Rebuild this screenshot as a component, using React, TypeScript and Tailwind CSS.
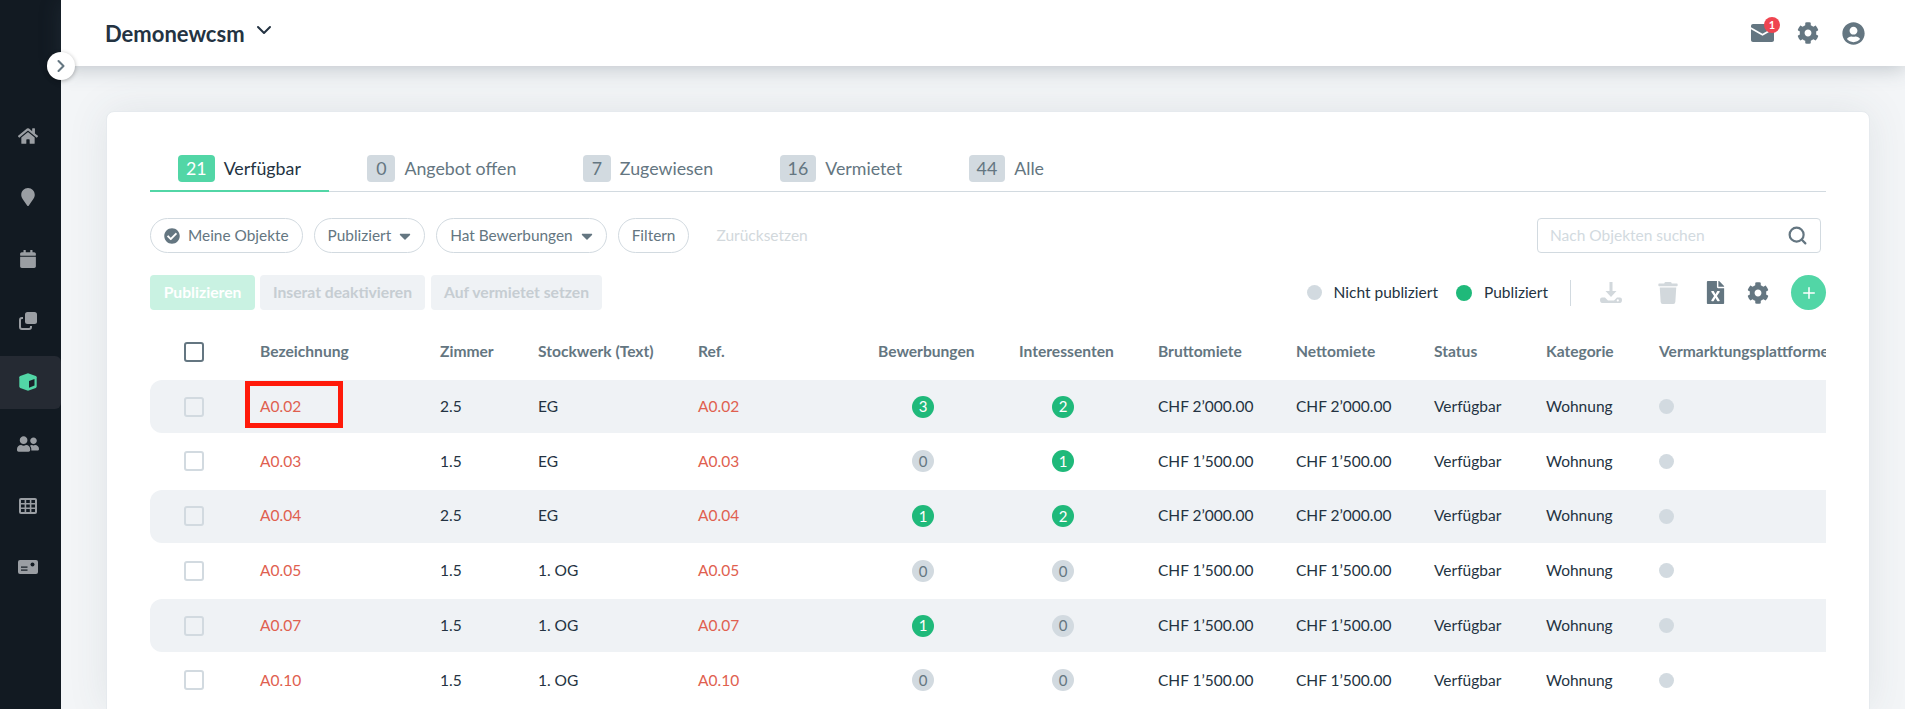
import React from 'react'
import { ChevronDown, ChevronRight, Plus, Search } from 'lucide-react'
import {
  FaCalendar,
  FaCaretDown,
  FaCheckCircle,
  FaCog,
  FaFileExcel,
  FaHome,
  FaMapMarker,
  FaTrash,
  FaUserCircle,
  FaUserFriends,
} from 'react-icons/fa'

const tabs = [
  { count: '21', label: 'Verfügbar', active: true },
  { count: '0', label: 'Angebot offen' },
  { count: '7', label: 'Zugewiesen' },
  { count: '16', label: 'Vermietet' },
  { count: '44', label: 'Alle' },
]

const rows = [
  { id: 'A0.02', rooms: '2.5', floor: 'EG', apps: 3, leads: 2, rent: 'CHF 2’000.00' },
  { id: 'A0.03', rooms: '1.5', floor: 'EG', apps: 0, leads: 1, rent: 'CHF 1’500.00' },
  { id: 'A0.04', rooms: '2.5', floor: 'EG', apps: 1, leads: 2, rent: 'CHF 2’000.00' },
  { id: 'A0.05', rooms: '1.5', floor: '1. OG', apps: 0, leads: 0, rent: 'CHF 1’500.00' },
  { id: 'A0.07', rooms: '1.5', floor: '1. OG', apps: 1, leads: 0, rent: 'CHF 1’500.00' },
  { id: 'A0.10', rooms: '1.5', floor: '1. OG', apps: 0, leads: 0, rent: 'CHF 1’500.00' },
]

const gridCols = 'grid grid-cols-[110px_180px_98px_160px_180px_141px_139px_138px_138px_112px_113px_260px]'

const CloneIcon = () => (
  <svg width="18" height="18" viewBox="0 0 18 18">
    <rect x="6" y="0" width="12" height="12" rx="2.500" fill="#9a9ea3" />
    <path d="M4 6H3a2 2 0 0 0-2 2v7a2 2 0 0 0 2 2h7a2 2 0 0 0 2-2v-1" fill="none" stroke="#9a9ea3" strokeWidth="2" />
  </svg>
)

const CubeIcon = () => (
  <svg width="18" height="18" viewBox="0 0 18 18">
    <path d="M9 .2 16.800 3c.5.2.9.7.9 1.200v9.400c0 .6-.4 1.100-.9 1.300L9 17.800 1.200 14.900c-.5-.2-.9-.7-.9-1.300V4.200c0-.5.4-1 .9-1.200z" fill="#52d6a6" />
    <path d="M10 8 15.500 6v6.500L10 14.800z" fill="#1b2129" />
  </svg>
)

const GridIcon = () => (
  <svg width="18" height="16" viewBox="0 0 18 16">
    <rect width="18" height="16" rx="2" fill="#9a9ea3" />
    <g fill="#121a22">
      <rect x="2" y="2" width="3.600" height="3" />
      <rect x="7.200" y="2" width="3.600" height="3" />
      <rect x="12.400" y="2" width="3.600" height="3" />
      <rect x="2" y="6.500" width="3.600" height="3" />
      <rect x="7.200" y="6.500" width="3.600" height="3" />
      <rect x="12.400" y="6.500" width="3.600" height="3" />
      <rect x="2" y="11" width="3.600" height="3" />
      <rect x="7.200" y="11" width="3.600" height="3" />
      <rect x="12.400" y="11" width="3.600" height="3" />
    </g>
  </svg>
)

const CardIcon = () => (
  <svg width="20" height="14" viewBox="0 0 20 14">
    <rect width="20" height="14" rx="2" fill="#9a9ea3" />
    <rect x="3" y="6.500" width="6.500" height="1.200" fill="#121a22" />
    <rect x="3" y="9.500" width="6.500" height="1.200" fill="#121a22" />
    <circle cx="14.500" cy="4.500" r="2" fill="#121a22" />
  </svg>
)

const MailIcon = () => (
  <svg width="23" height="18" viewBox="0 0 23 18">
    <path d="M2 0h19c1.100 0 2 .9 2 2v1.200l-11.500 6.600L0 3.200V2C0 .9.900 0 2 0z" fill="#647681" />
    <path d="M0 5.200l11.500 6.600L23 5.200V16c0 1.100-.9 2-2 2H2c-1.100 0-2-.9-2-2z" fill="#647681" />
  </svg>
)

const DownloadIcon = () => (
  <svg width="22" height="22" viewBox="0 0 22 22">
    <path d="M9.500 0h3v9h4L11 15 5.500 9h4z" fill="#d2d8dc" />
    <path d="M0 15.500h5l3 3h6l3-3h3c1 0 2 .8 2 2.500s-1 3-2 3H2c-1 0-2-1.300-2-3s1-2.500 2-2.500z" fill="#d2d8dc" />
    <circle cx="17.800" cy="18.400" r="1.100" fill="#fff" />
  </svg>
)

const navItems = [
  <FaHome size={20} key="home" />,
  <FaMapMarker size={18} key="map" />,
  <FaCalendar size={18} key="cal" />,
  <CloneIcon key="clone" />,
  <CubeIcon key="cube" />,
  <FaUserFriends size={22} key="users" />,
  <GridIcon key="grid" />,
  <CardIcon key="card" />,
]

const CountBadge = ({ value }: { value: number }) => (
  <span
    className={
      value > 0
        ? 'flex h-[22px] w-[22px] items-center justify-center rounded-full bg-[#1fb97a] text-[15px] text-white'
        : 'flex h-[22px] w-[22px] items-center justify-center rounded-full bg-[#d2dae0] text-[15px] text-[#647681]'
    }
  >
    {value}
  </span>
)

const Pill = ({ children }: { children: React.ReactNode }) => (
  <button className="flex h-[35px] items-center gap-2 rounded-full border border-[#d2dae0] bg-white px-[13px] text-[15.4px] text-[#647681]">
    {children}
  </button>
)

const App = () => {
  return (
    <div className="flex h-screen overflow-hidden bg-[#f3f5f7] text-[15.5px] text-[#243342] [font-family:Lato,sans-serif]">
      <aside className="flex w-[61px] shrink-0 flex-col gap-[8.7px] bg-[#121a22] pt-[109px] text-[#9a9ea3]">
        {navItems.map((icon, i) => (
          <div
            key={i}
            className={
              i === 4
                ? 'flex h-[53px] items-center justify-center rounded-r-md bg-[#252a33] pr-[5px]'
                : 'flex h-[53px] items-center justify-center pr-[5px]'
            }
          >
            {icon}
          </div>
        ))}
      </aside>

      <div className="relative min-w-0 flex-1">
        <button className="absolute left-[-14px] top-[52px] z-20 flex h-7 w-7 items-center justify-center rounded-full bg-white text-[#647681] shadow-[0_1px_4px_rgba(0,0,0,0.3)]">
          <ChevronRight size={20} strokeWidth={2.5} />
        </button>

        <header className="relative z-10 flex h-[66px] items-center justify-between bg-white pl-[44px] pr-[40px] shadow-[0_2px_20px_rgba(60,75,90,0.3)]">
          <div className="flex items-center gap-[7px]">
            <span className="text-[22px] font-bold text-[#243342]">Demonewcsm</span>
            <ChevronDown size={24} className="mb-[6px] text-[#243342]" />
          </div>
          <div className="flex items-center gap-[23px] text-[#647681]">
            <div className="relative">
              <MailIcon />
              <span className="absolute right-[-6px] top-[-7px] flex h-4 w-4 items-center justify-center rounded-full bg-[#ef4550] text-[11px] font-bold text-white">
                1
              </span>
            </div>
            <FaCog size={22} />
            <FaUserCircle size={23} />
          </div>
        </header>

        <main className="pl-[45px] pr-[35px] pt-[45px]">
          <section className="rounded-t-lg border border-[#e6eaee] bg-white px-[43px] pt-[43px] shadow-[0_0_40px_rgba(60,75,90,0.1)]">
            <nav className="flex gap-[10.5px] border-b border-[#d2dae0]">
              {tabs.map((tab) => (
                <div
                  key={tab.label}
                  className={
                    tab.active
                      ? 'mb-[-1px] flex h-[37px] items-start gap-[9px] border-b-2 border-[#52d6a6] px-7 text-[17.8px] text-[#243342]'
                      : 'flex h-[36px] items-start gap-[9px] px-7 text-[17.8px] text-[#647681]'
                  }
                >
                  <span
                    className={
                      tab.active
                        ? 'flex h-[27px] min-w-[28px] items-center justify-center rounded bg-[#52d6a6] px-2 text-white'
                        : 'flex h-[27px] min-w-[28px] items-center justify-center rounded bg-[#d2dae0] px-2'
                    }
                  >
                    {tab.count}
                  </span>
                  <span className="leading-[27px]">{tab.label}</span>
                </div>
              ))}
            </nav>

            <div className="mt-[26px] flex items-center gap-[11px]">
              <Pill>
                <FaCheckCircle size={16} />
                Meine Objekte
              </Pill>
              <Pill>
                Publiziert
                <FaCaretDown size={18} className="-mx-[3px]" />
              </Pill>
              <Pill>
                Hat Bewerbungen
                <FaCaretDown size={18} className="-mx-[3px]" />
              </Pill>
              <Pill>Filtern</Pill>
              <span className="ml-[16px] text-[15.5px] text-[#d2d8dc]">Zurücksetzen</span>
              <div className="ml-auto mr-[5px] flex h-[35px] w-[284px] items-center justify-between rounded border border-[#d2dae0] pl-3 pr-3 text-[#d2dae0]">
                <span>Nach Objekten suchen</span>
                <Search size={21} strokeWidth={2.5} className="text-[#647681]" />
              </div>
            </div>

            <div className="mt-[22px] flex h-[35px] items-center">
              <button className="h-[35px] w-[105px] rounded bg-[#c9f2e2] text-[15.7px] font-bold text-white">Publizieren</button>
              <button className="ml-[5px] h-[35px] w-[165px] rounded bg-[#eff2f5] text-[15.7px] font-bold text-[#c6cdd2]">Inserat deaktivieren</button>
              <button className="ml-[6px] h-[35px] w-[171px] rounded bg-[#eff2f5] text-[15.7px] font-bold text-[#c6cdd2]">Auf vermietet setzen</button>

              <div className="ml-auto flex items-center">
                <span className="h-[15px] w-[15px] rounded-full bg-[#d2dae0]" />
                <span className="ml-3">Nicht publiziert</span>
                <span className="ml-[18px] h-[16px] w-[16px] rounded-full bg-[#1fb97a]" />
                <span className="ml-3">Publiziert</span>
                <span className="ml-[22px] h-[26px] w-px bg-[#d2dae0]" />
                <span className="ml-[29px]">
                  <DownloadIcon />
                </span>
                <FaTrash size={22} className="ml-[35px] text-[#d2d8dc]" />
                <FaFileExcel size={23} className="ml-[25px] text-[#647681]" />
                <FaCog size={22} className="ml-[20px] text-[#647681]" />
                <span className="ml-[22px] flex h-[35px] w-[35px] items-center justify-center rounded-full bg-[#52d6a6] text-white">
                  <Plus size={18} />
                </span>
              </div>
            </div>

            <div className="overflow-hidden">
              <div className={`${gridCols} h-[70px] items-center pt-[14px] text-[15.6px] font-bold text-[#647681]`}>
                <span className="ml-[34px] h-5 w-5 rounded-[3px] border-2 border-[#647681]" />
                <span>Bezeichnung</span>
                <span>Zimmer</span>
                <span>Stockwerk (Text)</span>
                <span>Ref.</span>
                <span>Bewerbungen</span>
                <span>Interessenten</span>
                <span>Bruttomiete</span>
                <span>Nettomiete</span>
                <span>Status</span>
                <span>Kategorie</span>
                <span>Vermarktungsplattformen</span>
              </div>

              {rows.map((row, i) => (
                <div
                  key={row.id}
                  className={
                    i % 2 === 0
                      ? `${gridCols} mb-[1.75px] h-[53px] items-center rounded-l-xl bg-[#eff2f5]`
                      : `${gridCols} mb-[1.75px] h-[53px] items-center`
                  }
                >
                  <span className="ml-[34px] h-5 w-5 rounded-[3px] border-2 border-[#d2dae0]" />
                  <span className="relative text-[#e0604f]">
                    {row.id}
                    {i === 0 && (
                      <span className="absolute left-[-15px] top-[-14px] h-[47px] w-[98px] border-[5px] border-[#ff1a0a]" />
                    )}
                  </span>
                  <span>{row.rooms}</span>
                  <span>{row.floor}</span>
                  <span className="text-[#e0604f]">{row.id}</span>
                  <span className="pl-[34px]">
                    <CountBadge value={row.apps} />
                  </span>
                  <span className="pl-[33px]">
                    <CountBadge value={row.leads} />
                  </span>
                  <span>{row.rent}</span>
                  <span>{row.rent}</span>
                  <span>Verfügbar</span>
                  <span>Wohnung</span>
                  <span className="block h-[15px] w-[15px] rounded-full bg-[#d2dae0]" />
                </div>
              ))}
            </div>
          </section>
        </main>
      </div>
    </div>
  )
}

export default App
